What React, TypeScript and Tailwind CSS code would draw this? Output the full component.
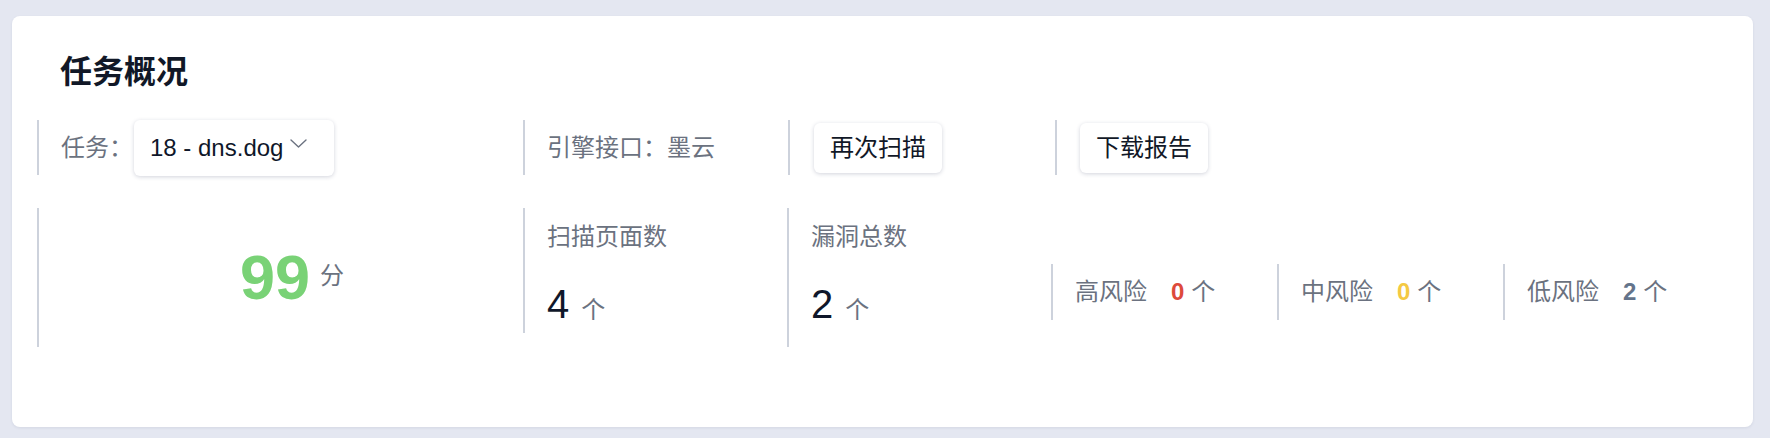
import React from "react";

const font = "font-['Liberation_Sans','Noto_Sans_CJK_SC',sans-serif]";

const risks = [
  { label: "高风险", count: 0, color: "text-[#dd4a3b]" },
  { label: "中风险", count: 0, color: "text-[#f4c943]" },
  { label: "低风险", count: 2, color: "text-[#64748b]" },
];

function Chevron() {
  return (
    <svg width="17" height="9" viewBox="0 0 17 9" fill="none" className="ml-[7px] mt-[-8px]">
      <path d="M1 1l7.5 7L16 1" stroke="#6b7280" strokeWidth="1.4" strokeLinecap="round" strokeLinejoin="round" />
    </svg>
  );
}

function Button({ children }: { children: React.ReactNode }) {
  return (
    <button className="h-[50px] w-[128px] rounded-[6px] bg-white text-[24px] text-[#111827] shadow-[0_1px_4px_rgba(30,41,80,0.2)]">
      {children}
    </button>
  );
}

function Stat({ label, value, height }: { label: string; value: number; height: string }) {
  return (
    <div className={`w-[264px] ${height} border-l-2 border-[#cdd2dc] pl-[22px] pt-[11px]`}>
      <div className="text-[24px] leading-[36px] text-[#6b7280]">{label}</div>
      <div className="mt-[29px] flex items-baseline leading-none">
        <span className="text-[40px] text-[#0f172a]">{value}</span>
        <span className="ml-[12px] text-[24px] text-[#6b7280]">个</span>
      </div>
    </div>
  );
}

export default function App() {
  return (
    <div className={`${font} min-h-screen w-full bg-[#e4e7f1] pl-3 pt-4`}>
      <div className="h-[411px] w-[1741px] rounded-lg bg-white pl-[25px] pt-8 shadow-[0_1px_3px_rgba(30,41,80,0.08)]">
        <h1 className="ml-[23px] text-[32px] font-bold leading-[48px] text-[#111827]">任务概况</h1>

        {/* toolbar */}
        <div className="mt-6 flex h-[55px] items-stretch">
          <div className="flex w-[486px] items-center border-l-2 border-[#cdd2dc] pl-[22px]">
            <span className="text-[24px] text-[#6b7280]">任务：</span>
            <div className="ml-[1px] flex h-[56px] w-[200px] items-center rounded-[6px] bg-white pl-4 shadow-[0_1px_4px_rgba(30,41,80,0.2)]">
              <span className="text-[24px] text-[#0f172a]">18 - dns.dog</span>
              <Chevron />
            </div>
          </div>
          <div className="flex w-[265px] items-center border-l-2 border-[#cdd2dc] pl-[22px]">
            <span className="text-[24px] text-[#6b7280]">引擎接口：墨云</span>
          </div>
          <div className="flex w-[267px] items-center border-l-2 border-[#cdd2dc] pl-[24px]">
            <Button>再次扫描</Button>
          </div>
          <div className="flex items-center border-l-2 border-[#cdd2dc] pl-[23px]">
            <Button>下载报告</Button>
          </div>
        </div>

        {/* stats */}
        <div className="mt-[33px] flex items-start">
          <div className="flex h-[139px] w-[486px] items-center justify-center border-l-2 border-[#cdd2dc] pl-[22px]">
            <span className="text-[63px] font-bold leading-none text-[#79d276]">99</span>
            <span className="ml-[10px] mt-[-4px] text-[24px] text-[#6b7280]">分</span>
          </div>
          <Stat label="扫描页面数" value={4} height="h-[125px]" />
          <div className="flex items-start">
            <Stat label="漏洞总数" value={2} height="h-[139px]" />
          </div>
          <div className="mt-[56px] flex">
            {risks.map((r) => (
              <div key={r.label} className="flex h-[56px] w-[226px] items-center border-l-2 border-[#cdd2dc] pl-[22px]">
                <span className="text-[24px] text-[#6b7280]">{r.label}</span>
                <span className={`ml-[24px] text-[24px] font-bold ${r.color}`}>{r.count}</span>
                <span className="ml-[7px] text-[24px] text-[#6b7280]">个</span>
              </div>
            ))}
          </div>
        </div>
      </div>
    </div>
  );
}
